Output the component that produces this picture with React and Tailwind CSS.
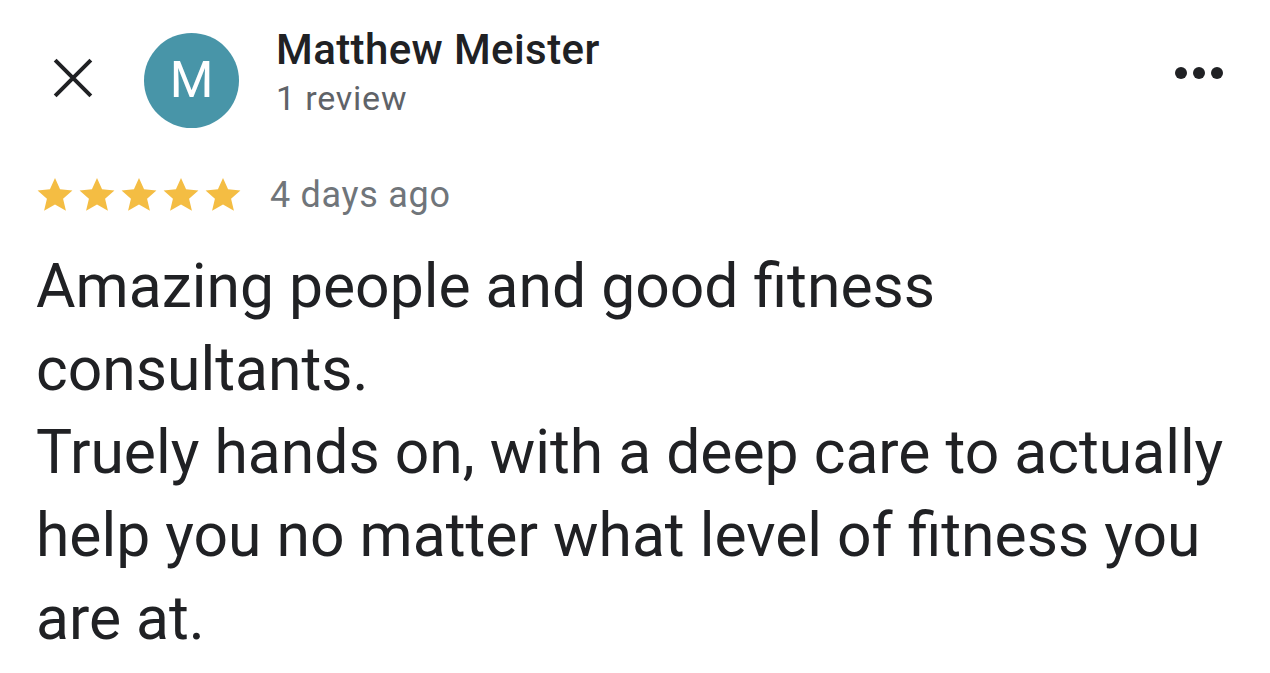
import React from "react";

const Star = () => (
  <svg viewBox="0 0 24 24" className="w-[38px] h-[38px]" fill="#f4bd43">
    <path d="M12 1.2l3.2 7.2 7.8.7-5.9 5.2 1.8 7.7L12 18l-6.9 4 1.8-7.7L1 9.1l7.8-.7z" />
  </svg>
);

const App = () => {
  return (
    <div
      className="w-[1270px] h-[673px] bg-white overflow-hidden text-[#202124]"
      style={{ fontFamily: "Roboto, 'Noto Sans', sans-serif" }}
    >
      {/* header */}
      <div className="flex items-start pl-[52px] pr-[47px] pt-[33px]">
        <svg
          viewBox="0 0 40 40"
          className="w-[42px] h-[42px] mt-[24px] mr-[50px] shrink-0"
          stroke="#202124"
          strokeWidth="3.8"
          fill="none"
        >
          <path d="M3 3l34 34M37 3L3 37" />
        </svg>
        <div className="w-[95px] h-[95px] rounded-full bg-[#4895a8] flex items-center justify-center text-white text-[50px] shrink-0">
          M
        </div>
        <div className="ml-[37px] mt-[-7px] flex flex-col">
          <div className="text-[42px] leading-[48px] font-medium tracking-[0.4px]">Matthew Meister</div>
          <div className="text-[34px] leading-[48px] text-[#5f6368] tracking-[0.8px]">1 review</div>
        </div>
        <div className="ml-auto mt-[34px] flex gap-[6px]">
          <span className="w-[12px] h-[12px] rounded-full bg-[#202124]" />
          <span className="w-[12px] h-[12px] rounded-full bg-[#202124]" />
          <span className="w-[12px] h-[12px] rounded-full bg-[#202124]" />
        </div>
      </div>

      {/* rating */}
      <div className="flex items-center pl-[36px] mt-[46px] h-[42px]">
        <div className="flex gap-[4px]">
          <Star />
          <Star />
          <Star />
          <Star />
          <Star />
        </div>
        <span className="ml-[28px] text-[36px] leading-[42px] text-[#70757a] tracking-[0.7px]">4 days ago</span>
      </div>

      {/* review body */}
      <div className="pl-[36px] pr-[34px] mt-[29px] text-[60.6px] leading-[83px]">
        <p>Amazing people and good fitness consultants.</p>
        <p>Truely hands on, with a deep care to actually help you no matter what level of fitness you are at.</p>
      </div>
    </div>
  );
};

export default App;
